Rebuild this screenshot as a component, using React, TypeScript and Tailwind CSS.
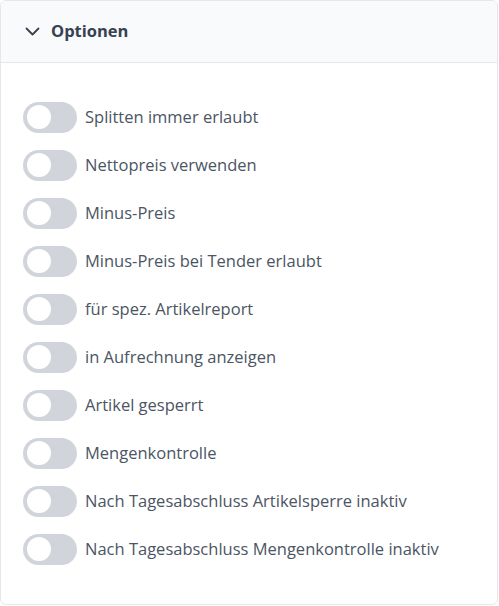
import React from "react";

const items = [
  "Splitten immer erlaubt",
  "Nettopreis verwenden",
  "Minus-Preis",
  "Minus-Preis bei Tender erlaubt",
  "für spez. Artikelreport",
  "in Aufrechnung anzeigen",
  "Artikel gesperrt",
  "Mengenkontrolle",
  "Nach Tagesabschluss Artikelsperre inaktiv",
  "Nach Tagesabschluss Mengenkontrolle inaktiv",
];

export default function App() {
  return (
    <div
      className="w-[499px] h-[606px] bg-white"
      style={{ fontFamily: '"Open Sans", "Noto Sans", sans-serif' }}
    >
      <div className="w-[498px] h-[605px] border border-[#e5e7eb] rounded-[6px] overflow-hidden flex flex-col">
        <div className="h-[62px] bg-[#f9fafb] border-b border-[#e5e7eb] flex items-center pl-[24px] gap-[11px] shrink-0">
          <svg width="15" height="9" viewBox="0 0 15 9" fill="none" stroke="#374151" strokeWidth="1.8" strokeLinecap="round" strokeLinejoin="round">
            <path d="M1.5 1.5l6 6 6-6" />
          </svg>
          <span className="text-[16.5px] font-bold text-[#374151]">Optionen</span>
        </div>
        <div className="pt-[30px] pl-[22px] flex flex-col">
          {items.map((t) => (
            <div key={t} className="h-12 flex items-center gap-[8px]">
              <div className="w-[54px] h-[31px] rounded-full bg-[#d1d5db] flex items-center pl-[4px] shrink-0">
                <div className="w-[24px] h-[24px] rounded-full bg-white" />
              </div>
              <span className="text-[16.5px] text-[#4b5563]">{t}</span>
            </div>
          ))}
        </div>
      </div>
    </div>
  );
}
